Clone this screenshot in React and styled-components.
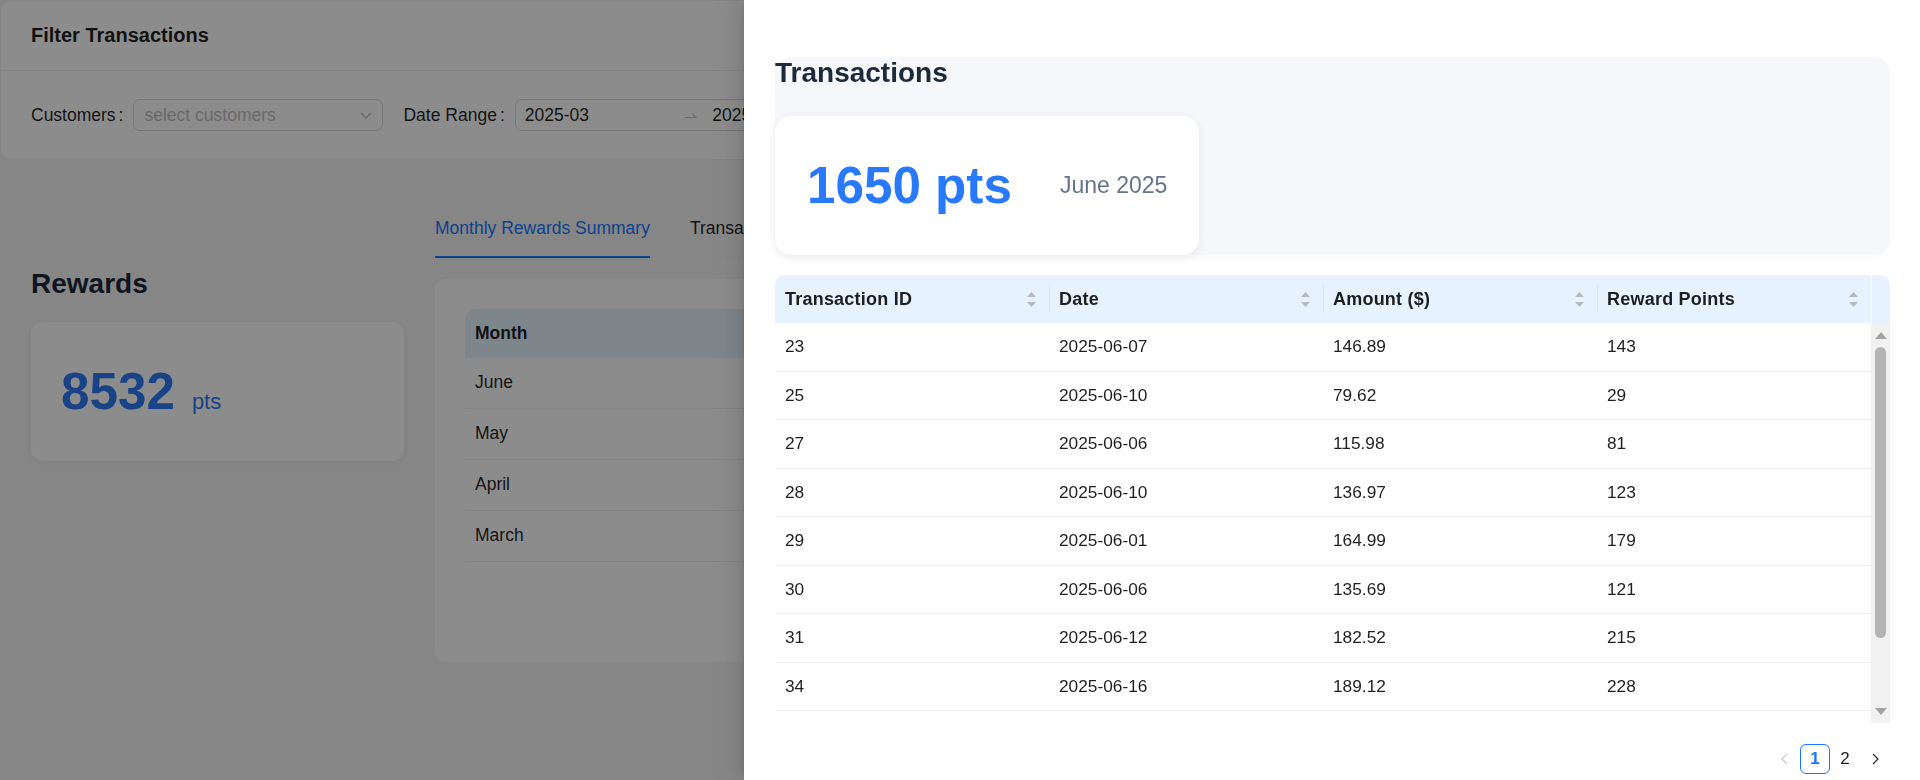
import React from 'react';
import styled, { createGlobalStyle } from 'styled-components';

const GlobalStyle = createGlobalStyle`
  html, body {
    margin: 0;
    padding: 0;
    background: #f5f5f5;
    font-family: "Liberation Sans", Arial, sans-serif;
    color: rgba(0, 0, 0, 0.88);
  }
  * {
    box-sizing: border-box;
  }
`;

const Page = styled.div`
  min-height: 780px;
`;

const FilterCard = styled.section`
  background: #fff;
  border: 1px solid #f0f0f0;
  border-radius: 10px;
`;

const FilterHeader = styled.div`
  height: 70px;
  display: flex;
  align-items: center;
  padding: 0 30px;
  border-bottom: 1px solid #f0f0f0;
  font-size: 20px;
  font-weight: 700;
`;

const FilterBody = styled.div`
  height: 88px;
  display: flex;
  align-items: center;
  gap: 20px;
  padding: 0 30px;
`;

const Field = styled.div`
  display: flex;
  align-items: center;
`;

const Label = styled.label`
  font-size: 17.5px;
  display: flex;
  align-items: center;
  &::after {
    content: ':';
    margin: 0 10px 0 3px;
  }
`;

const InputBox = styled.div`
  height: 32px;
  width: ${(p) => p.$width}px;
  border: 1px solid #d9d9d9;
  border-radius: 7px;
  background: #fff;
  display: flex;
  align-items: center;
  padding: 0 ${(p) => p.$pad || 9}px;
  font-size: 17.5px;
`;

const Placeholder = styled.span`
  flex: 1;
  color: #bfbfbf;
`;

const RangeInput = styled.span`
  flex: 1;
`;

const Sep = styled.span`
  display: flex;
  margin: 0 15px 0 8px;
  color: #bfbfbf;
`;

const Main = styled.div`
  display: flex;
  gap: 31px;
  margin-top: 40px;
  padding: 0 30px 0 31px;
`;

const Side = styled.aside`
  width: 373px;
  flex-shrink: 0;
  padding-top: 68px;
`;

const SectionTitle = styled.h2`
  margin: 0;
  font-size: 28px;
  line-height: 32px;
  font-weight: 700;
  color: #1e293b;
`;

const PointsCard = styled.div`
  margin-top: 22px;
  height: 139px;
  background: #fff;
  border-radius: 12px;
  box-shadow: 0 2px 8px rgba(0, 0, 0, 0.06);
  display: flex;
  align-items: center;
  padding: 0 30px;
`;

const Value = styled.div`
  display: flex;
  align-items: baseline;
  gap: 17px;
  color: #2f7bf5;
`;

const Big = styled.span`
  font-size: 51.2px;
  font-weight: 700;
`;

const Unit = styled.span`
  font-size: 22px;
`;

const Content = styled.div`
  flex: 1;
  min-width: 0;
`;

const TabBar = styled.div`
  display: flex;
  gap: 40px;
  border-bottom: 1px solid #f0f0f0;
`;

const Tab = styled.div`
  position: relative;
  padding: 15px 0;
  font-size: 17.5px;
  line-height: 27px;
  color: ${(p) => (p.$active ? '#1677ff' : 'rgba(0,0,0,0.88)')};
  &::after {
    content: '';
    position: absolute;
    left: 0;
    right: 0;
    bottom: -1px;
    height: 2.5px;
    background: ${(p) => (p.$active ? '#1677ff' : 'transparent')};
  }
`;

const TableCard = styled.div`
  margin-top: 21px;
  height: 383px;
  background: #fff;
  border-radius: 10px;
  padding: 30px;
`;

const MonthGrid = styled.div`
  display: grid;
  grid-template-columns: 1fr 1fr;
`;

const MonthHead = styled.div`
  height: 48.5px;
  display: flex;
  align-items: center;
  padding: 0 10px;
  background: #e6f3fe;
  font-size: 17.5px;
  font-weight: 700;
  &:first-child {
    border-top-left-radius: 10px;
  }
  &:nth-child(2) {
    border-top-right-radius: 10px;
  }
`;

const MonthCell = styled.div`
  height: 51px;
  display: flex;
  align-items: center;
  padding: 0 10px;
  border-bottom: 1px solid #f0f0f0;
  font-size: 17.5px;
`;

const Mask = styled.div`
  position: fixed;
  inset: 0;
  background: rgba(0, 0, 0, 0.45);
`;

const Drawer = styled.div`
  position: fixed;
  top: 0;
  right: 0;
  bottom: 0;
  width: 1176px;
  background: #fff;
  box-shadow: -6px 0 16px 0 rgba(0, 0, 0, 0.08), -3px 0 6px -4px rgba(0, 0, 0, 0.12),
    -9px 0 28px 8px rgba(0, 0, 0, 0.05);
  padding: 57px 30px 0 31px;
`;

const Summary = styled.section`
  background: #f5f7fa;
  border-radius: 16px;
  box-shadow: 0 4px 10px rgba(0, 0, 0, 0.02);
`;

const MonthCard = styled.div`
  margin-top: 27px;
  display: inline-flex;
  align-items: center;
  gap: 48px;
  height: 139px;
  padding: 0 32px;
  background: #fff;
  border-radius: 16px;
  box-shadow: 0 2px 10px rgba(0, 0, 0, 0.07);
`;

const BigPts = styled.span`
  font-size: 51.2px;
  font-weight: 700;
  color: #2979ff;
`;

const MonthLabel = styled.span`
  font-size: 23px;
  color: #64748b;
`;

const TxTable = styled.div`
  margin-top: 20px;
`;

const HeadRow = styled.div`
  display: grid;
  grid-template-columns: repeat(4, 1fr) 19px;
  background: #e6f3fe;
  border-radius: 10px 10px 0 0;
`;

const HeadCell = styled.div`
  position: relative;
  height: 48px;
  display: flex;
  align-items: center;
  justify-content: space-between;
  padding: 0 12px 0 10px;
  font-size: 18px;
  font-weight: 700;
  letter-spacing: 0.22px;
  color: rgba(0, 0, 0, 0.88);
  &::before {
    content: '';
    position: absolute;
    left: 0;
    top: 50%;
    height: 28px;
    width: 1px;
    transform: translateY(-50%);
    background: ${(p) => (p.$first ? 'transparent' : 'rgba(0,0,0,0.05)')};
  }
`;

const ScrollCell = styled.div`
  border-left: 1px solid rgba(255, 255, 255, 0.7);
`;

const Body = styled.div`
  height: 400px;
  display: flex;
`;

const Rows = styled.div`
  flex: 1;
  min-width: 0;
  overflow: hidden;
`;

const Track = styled.div`
  width: 19px;
  flex-shrink: 0;
  background: #f1f1f1;
  display: flex;
  flex-direction: column;
  align-items: center;
  padding: 9px 0 8px;
`;

const Thumb = styled.div`
  margin-top: 8px;
  width: 11px;
  height: 291px;
  border-radius: 6px;
  background: #b4b4b4;
`;

const TrackFill = styled.div`
  flex: 1;
`;

const Row = styled.div`
  display: grid;
  grid-template-columns: repeat(4, 1fr);
  border-bottom: 1px solid #f0f0f0;
`;

const Cell = styled.div`
  padding: 10px;
  font-size: 17.3px;
  line-height: 27.5px;
`;

const Pager = styled.div`
  margin-top: 21px;
  display: flex;
  justify-content: flex-end;
`;

const PageItem = styled.div`
  width: 30px;
  height: 30px;
  display: flex;
  align-items: center;
  justify-content: center;
  font-size: 17px;
  border-radius: 6px;
  border: 1px solid ${(p) => (p.$active ? '#1677ff' : 'transparent')};
  color: ${(p) => (p.$active ? '#1677ff' : p.$disabled ? '#c8c8c8' : 'rgba(0,0,0,0.88)')};
  font-weight: ${(p) => (p.$active ? 700 : 400)};
`;

const SortIcon = () => (
  <svg width="11" height="17" viewBox="0 0 11 17">
    <path d="M5.5 1 L10 6 H1 Z" fill="#b5b9bf" />
    <path d="M5.5 16 L10 11 H1 Z" fill="#b5b9bf" />
  </svg>
);

const ArrowTri = ({ up }) => (
  <svg width="12" height="7" viewBox="0 0 12 7">
    <path d={up ? 'M6 0 L12 7 H0 Z' : 'M0 0 H12 L6 7 Z'} fill="#a3a3a3" />
  </svg>
);

const Chevron = ({ dir = 'down', color = '#bfbfbf', size = 12 }) => {
  const d = {
    down: 'M1 4 L6 9 L11 4',
    left: 'M8 1 L3 6 L8 11',
    right: 'M4 1 L9 6 L4 11',
  }[dir];
  return (
    <svg width={size} height={size} viewBox="0 0 12 12">
      <path d={d} fill="none" stroke={color} strokeWidth="1.3" />
    </svg>
  );
};

const SwapRight = () => (
  <svg width="12" height="8" viewBox="0 0 12 8">
    <path d="M0 6.5 H11 L7.5 3" fill="none" stroke="#bfbfbf" strokeWidth="1.2" />
  </svg>
);

const months = ['June', 'May', 'April', 'March'];

const rows = [
  ['23', '2025-06-07', '146.89', '143'],
  ['25', '2025-06-10', '79.62', '29'],
  ['27', '2025-06-06', '115.98', '81'],
  ['28', '2025-06-10', '136.97', '123'],
  ['29', '2025-06-01', '164.99', '179'],
  ['30', '2025-06-06', '135.69', '121'],
  ['31', '2025-06-12', '182.52', '215'],
  ['34', '2025-06-16', '189.12', '228'],
];

const columns = ['Transaction ID', 'Date', 'Amount ($)', 'Reward Points'];

export default function App() {
  return (
    <>
      <GlobalStyle />
      <Page>
        <FilterCard>
          <FilterHeader>Filter Transactions</FilterHeader>
          <FilterBody>
            <Field>
              <Label>Customers</Label>
              <InputBox $width={250} $pad={10}>
                <Placeholder>select customers</Placeholder>
                <Chevron />
              </InputBox>
            </Field>
            <Field>
              <Label>Date Range</Label>
              <InputBox $width={360}>
                <RangeInput>2025-03</RangeInput>
                <Sep>
                  <SwapRight />
                </Sep>
                <RangeInput>2025-06</RangeInput>
              </InputBox>
            </Field>
          </FilterBody>
        </FilterCard>

        <Main>
          <Side>
            <SectionTitle>Rewards</SectionTitle>
            <PointsCard>
              <Value>
                <Big>8532</Big>
                <Unit>pts</Unit>
              </Value>
            </PointsCard>
          </Side>
          <Content>
            <TabBar>
              <Tab $active>Monthly Rewards Summary</Tab>
              <Tab>Transactions</Tab>
            </TabBar>
            <TableCard>
              <MonthGrid>
                <MonthHead>Month</MonthHead>
                <MonthHead>Reward Points</MonthHead>
                {months.map((m) => (
                  <React.Fragment key={m}>
                    <MonthCell>{m}</MonthCell>
                    <MonthCell>View</MonthCell>
                  </React.Fragment>
                ))}
              </MonthGrid>
            </TableCard>
          </Content>
        </Main>
      </Page>

      <Mask />

      <Drawer>
        <Summary>
          <SectionTitle>Transactions</SectionTitle>
          <MonthCard>
            <BigPts>1650 pts</BigPts>
            <MonthLabel>June 2025</MonthLabel>
          </MonthCard>
        </Summary>

        <TxTable>
          <HeadRow>
            {columns.map((c, i) => (
              <HeadCell key={c} $first={i === 0}>
                {c}
                <SortIcon />
              </HeadCell>
            ))}
            <ScrollCell />
          </HeadRow>
          <Body>
            <Rows>
              {rows.map((r) => (
                <Row key={r[0]}>
                  {r.map((v, i) => (
                    <Cell key={i}>{v}</Cell>
                  ))}
                </Row>
              ))}
            </Rows>
            <Track>
              <ArrowTri up />
              <Thumb />
              <TrackFill />
              <ArrowTri />
            </Track>
          </Body>
        </TxTable>

        <Pager>
          <PageItem $disabled>
            <Chevron dir="left" color="#c8c8c8" />
          </PageItem>
          <PageItem $active>1</PageItem>
          <PageItem>2</PageItem>
          <PageItem>
            <Chevron dir="right" color="#333" />
          </PageItem>
        </Pager>
      </Drawer>
    </>
  );
}
